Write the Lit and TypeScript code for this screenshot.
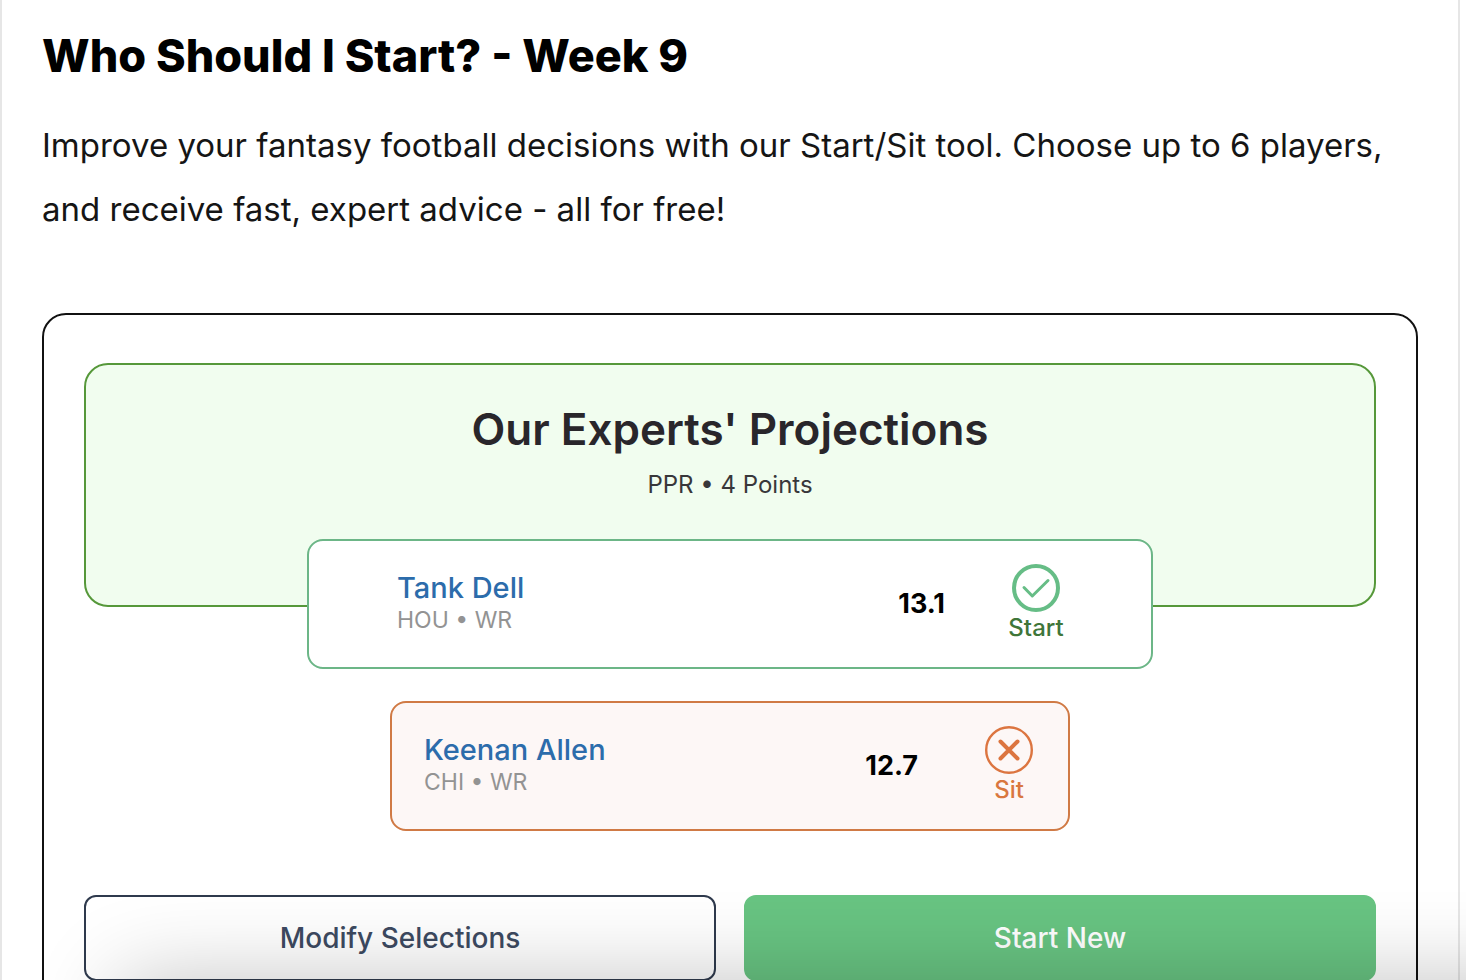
import { LitElement, html, css, svg } from "lit";
import { customElement, property } from "lit/decorators.js";

type Verdict = "start" | "sit";

interface Player {
  name: string;
  team: string;
  position: string;
  points: string;
  verdict: Verdict;
}

const PLAYERS: Player[] = [
  { name: "Tank Dell", team: "HOU", position: "WR", points: "13.1", verdict: "start" },
  { name: "Keenan Allen", team: "CHI", position: "WR", points: "12.7", verdict: "sit" },
];

const startMark = svg`
  <circle cx="24" cy="24" r="22" stroke-width="4"></circle>
  <path d="M12 23.5 L20.3 32 L36 16.5" stroke-width="3"></path>`;

const sitMark = svg`
  <circle cx="24" cy="24" r="22.8" stroke-width="2.4"></circle>
  <path d="M15.5 15.5 L32.5 32.5 M32.5 15.5 L15.5 32.5" stroke-width="4"></path>`;

@customElement("player-row")
class PlayerRow extends LitElement {
  @property({ attribute: false }) player!: Player;

  static styles = css`
    :host {
      display: block;
      width: 100%;
    }
    .row {
      box-sizing: border-box;
      display: flex;
      align-items: center;
      height: 130px;
      margin: 0 auto;
      border: 2px solid;
      border-radius: 16px;
    }
    .start {
      max-width: 846px;
      padding: 0 86px 0 88px;
      border-color: #6cb687;
      background: #fff;
    }
    .sit {
      max-width: 680px;
      padding: 0 34px 0 32px;
      border-color: #d07a45;
      background: #fdf7f6;
    }
    .who {
      flex: 1;
      min-width: 0;
    }
    .name {
      display: block;
      font-size: 29px;
      line-height: 32px;
      font-weight: 500;
      color: #2c6cab;
      text-decoration: none;
    }
    .meta {
      margin: 0;
      font-size: 23px;
      line-height: 32px;
      color: #939393;
    }
    .points {
      font-size: 27px;
      line-height: 32px;
      font-weight: 700;
      color: #000;
    }
    .verdict {
      display: flex;
      flex-direction: column;
      align-items: center;
      width: 58px;
      margin-left: 62px;
      font-size: 24px;
      line-height: 32px;
      font-weight: 500;
    }
    .sit .verdict {
      width: 50px;
      margin-left: 66px;
    }
    .start .verdict {
      color: #3f7639;
    }
    .sit .verdict {
      color: #d9773f;
    }
    .mark {
      width: 48px;
      height: 48px;
      fill: none;
      stroke-linecap: round;
      stroke-linejoin: round;
    }
    .start .mark {
      stroke: #66bd86;
    }
    .sit .mark {
      stroke: #dc7540;
    }
  `;

  render() {
    const p = this.player;
    const start = p.verdict === "start";
    return html`
      <article class="row ${p.verdict}">
        <div class="who">
          <a class="name" href="#">${p.name}</a>
          <p class="meta">${p.team} • ${p.position}</p>
        </div>
        <span class="points">${p.points}</span>
        <div class="verdict">
          <svg class="mark" viewBox="0 0 48 48" aria-hidden="true">${start ? startMark : sitMark}</svg>
          <span>${start ? "Start" : "Sit"}</span>
        </div>
      </article>
    `;
  }
}

@customElement("app-root")
class AppRoot extends LitElement {
  static styles = css`
    :host {
      display: block;
      position: relative;
      height: 100vh;
      overflow: hidden;
      background: #fff;
      font-family: Inter, "Open Sans", sans-serif;
    }
    .page {
      box-sizing: border-box;
      min-height: 100%;
      margin-right: 6px;
      padding: 24px 40px 40px;
      border: solid #e6e6e6;
      border-width: 0 2px;
    }
    .title {
      margin: 0;
      font-size: 45px;
      line-height: 64px;
      font-weight: 800;
      color: #000;
    }
    .intro {
      margin: 25px 0 72px;
      font-size: 33px;
      line-height: 64px;
      color: #151515;
    }
    .tool {
      padding: 48px 40px;
      border: 2px solid #111;
      border-radius: 24px;
    }
    .banner {
      box-sizing: border-box;
      height: 244px;
      padding-top: 32px;
      border: 2px solid #56983a;
      border-radius: 24px;
      background: #f1fdef;
      text-align: center;
    }
    .heading {
      margin: 0;
      font-size: 44px;
      line-height: 64px;
      font-weight: 600;
      color: #29262b;
    }
    .scoring {
      margin: 8px 0 0;
      font-size: 24px;
      line-height: 32px;
      color: #38373a;
    }
    .players {
      position: relative;
      display: grid;
      gap: 32px;
      margin: -68px 0 64px;
    }
    .actions {
      display: grid;
      grid-template-columns: 1fr 1fr;
      gap: 28px;
    }
    .button {
      height: 86px;
      padding: 0 16px;
      border: 2px solid #2f3a4d;
      border-radius: 12px;
      background: #fff;
      font-family: inherit;
      font-size: 28px;
      font-weight: 500;
      color: #3d4a61;
    }
    .primary {
      border-color: #68c482;
      background: #68c482;
      color: #fff;
    }
    .shade {
      position: absolute;
      top: 100%;
      left: 120px;
      right: -120px;
      height: 120px;
      box-shadow: 0 0 88px rgba(0, 0, 0, 0.24);
      pointer-events: none;
    }
  `;

  render() {
    return html`
      <main class="page">
        <h1 class="title">Who Should I Start? - Week 9</h1>
        <p class="intro">
          Improve your fantasy football decisions with our Start/Sit tool. Choose up to 6 players,
          and receive fast, expert advice - all for free!
        </p>
        <section class="tool">
          <header class="banner">
            <h2 class="heading">Our Experts' Projections</h2>
            <p class="scoring">PPR • 4 Points</p>
          </header>
          <div class="players">
            ${PLAYERS.map((p) => html`<player-row .player=${p}></player-row>`)}
          </div>
          <div class="actions">
            <button class="button" type="button">Modify Selections</button>
            <button class="button primary" type="button">Start New</button>
          </div>
        </section>
      </main>
      <div class="shade"></div>
    `;
  }
}
